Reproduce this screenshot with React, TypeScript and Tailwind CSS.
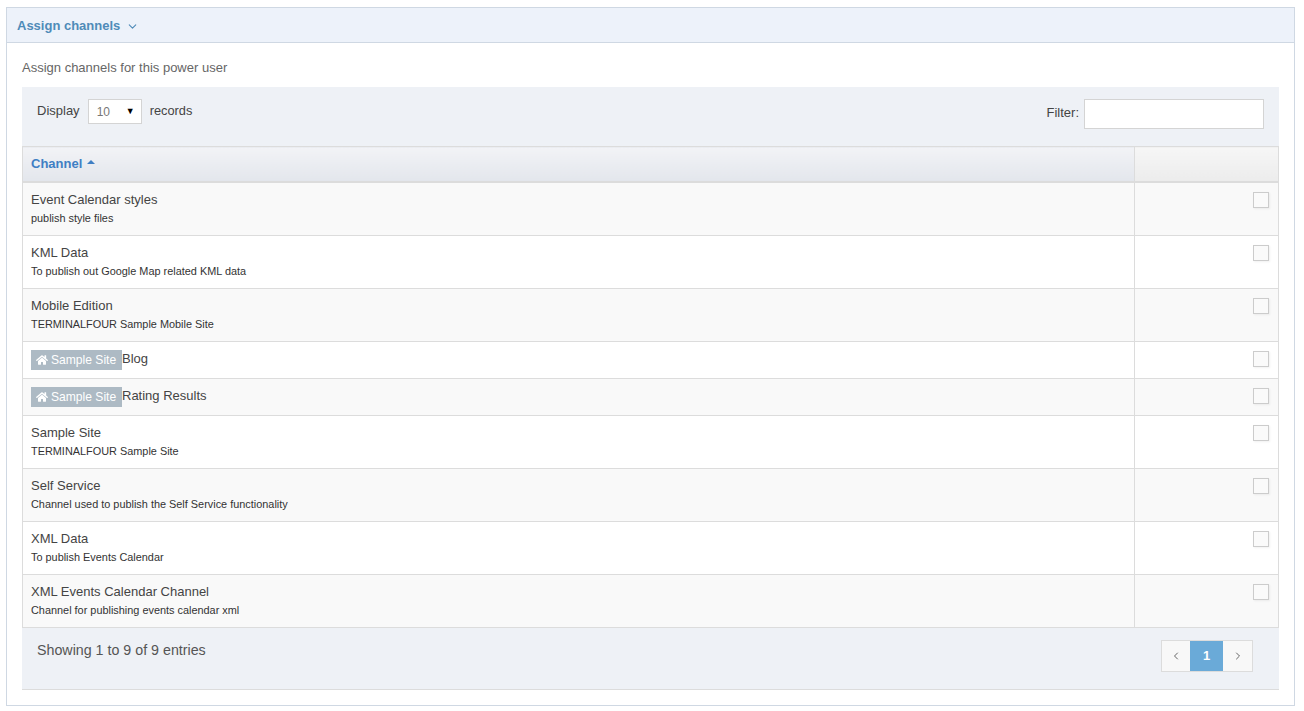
import { FaHome } from 'react-icons/fa';
import { ChevronDown, ChevronLeft, ChevronRight } from 'lucide-react';

interface Channel {
  name: string;
  description?: string;
  site?: boolean;
}

const channels: Channel[] = [
  { name: 'Event Calendar styles', description: 'publish style files' },
  { name: 'KML Data', description: 'To publish out Google Map related KML data' },
  { name: 'Mobile Edition', description: 'TERMINALFOUR Sample Mobile Site' },
  { name: 'Blog', site: true },
  { name: 'Rating Results', site: true },
  { name: 'Sample Site', description: 'TERMINALFOUR Sample Site' },
  { name: 'Self Service', description: 'Channel used to publish the Self Service functionality' },
  { name: 'XML Data', description: 'To publish Events Calendar' },
  { name: 'XML Events Calendar Channel', description: 'Channel for publishing events calendar xml' },
];

export default function App() {
  return (
    <div className="h-[711px] bg-white pt-[7px] px-[6px] font-['Liberation_Sans',Arial,sans-serif] text-[#444]">
      <div className="h-[699px] w-[1289px] border border-[#cfd8e3]">
        <div className="h-[35px] border-b border-[#cfd8e3] bg-[#edf2fa] pl-[10px] pt-[1px] flex items-center text-[13px] font-bold text-[#4f8bb8]">
          Assign channels
          <ChevronDown className="ml-[6px] mt-[1px] text-[#4f8bb8]" size={13} strokeWidth={2} />
        </div>
        <div className="px-[15px] pt-[17px]">
          <p className="text-[13px] leading-[16px] text-[#666] h-[27px]">Assign channels for this power user</p>
          <div className="w-[1257px] bg-[#eef1f6]">
            <div className="h-[59px] flex justify-between pt-[12px] pl-[15px] pr-[15px]">
              <div className="flex items-start text-[13px] text-[#444]">
                <span className="leading-[24px]">Display</span>
                <div className="ml-[8px] w-[54px] h-[25px] border border-[#d4d4d4] bg-white flex items-center justify-between pl-[8px] pr-[6px] text-[12px] text-[#777]">
                  10
                  <span className="text-[9px] text-black">▼</span>
                </div>
                <span className="ml-[8px] leading-[24px] text-[12.8px]">records</span>
              </div>
              <div className="flex items-start text-[13px]">
                <span className="leading-[28px] mr-[5px]">Filter:</span>
                <input className="w-[180px] h-[30px] border border-[#d4d4d4] bg-white" />
              </div>
            </div>
            <table className="w-[1257px] table-fixed border-collapse">
              <thead>
                <tr className="h-[35px]">
                  <th className="border border-[#dcdcdc] border-b-2 bg-gradient-to-b from-[#f2f3f6] to-[#e3e6ec] pl-[8px] text-left text-[13px] font-bold text-[#3f7fc4]">
                    Channel
                    <span className="inline-block ml-[5px] mb-[4px] w-0 h-0 border-x-[4px] border-x-transparent border-b-[4px] border-b-[#3f7fc4]" />
                  </th>
                  <th className="w-[144px] border border-[#dcdcdc] border-b-2 bg-gradient-to-b from-[#f6f6f6] to-[#ececec]" />
                </tr>
              </thead>
              <tbody>
                {channels.map((channel, i) => (
                  <tr key={channel.name} className={i % 2 === 0 ? 'bg-[#f9f9f9]' : 'bg-white'}>
                    <td
                      className={`border border-[#dcdcdc] pl-[8px] align-top ${
                        channel.site ? 'h-[37px] pt-[8px]' : i === 0 ? 'h-[54px] pt-[9px]' : 'h-[53px] pt-[9px]'
                      }`}
                    >
                      <div className="flex items-start text-[13px] leading-[16px] text-[#444]">
                        {channel.site && (
                          <span className="flex items-center h-[20px] w-[91px] bg-[#adbac4] pl-[5px] text-[12.1px] text-white">
                            <FaHome className="mr-[3px] text-[12px]" />
                            Sample Site
                          </span>
                        )}
                        <span className={channel.site ? 'pt-[1px]' : ''}>{channel.name}</span>
                      </div>
                      {channel.description && (
                        <div className="mt-[3px] text-[10.9px] leading-[14px] text-[#333]">{channel.description}</div>
                      )}
                    </td>
                    <td className="border border-[#dcdcdc] align-top pt-[9px] pr-[9px]">
                      <div className="ml-auto w-[16px] h-[16px] border border-[#ccc] bg-[#fafafa] shadow-[1px_1px_2px_rgba(0,0,0,0.06)]" />
                    </td>
                  </tr>
                ))}
              </tbody>
            </table>
            <div className="h-[62px] border-b border-[#dcdcdc] flex justify-between pl-[15px] pr-[26px] pt-[12px]">
              <div className="text-[14.25px] leading-[20px] text-[#555]">Showing 1 to 9 of 9 entries</div>
              <div className="flex h-[32px] border border-[#dcdcdc] text-[13px]">
                <div className="w-[28px] bg-[#f8f8f8] flex items-center justify-center text-[#666]">
                  <ChevronLeft size={12} strokeWidth={2} />
                </div>
                <div className="w-[33px] bg-[#6aaad8] flex items-center justify-center font-bold text-white">1</div>
                <div className="w-[29px] bg-[#f8f8f8] flex items-center justify-center text-[#666]">
                  <ChevronRight size={12} strokeWidth={2} />
                </div>
              </div>
            </div>
          </div>
        </div>
      </div>
    </div>
  );
}
